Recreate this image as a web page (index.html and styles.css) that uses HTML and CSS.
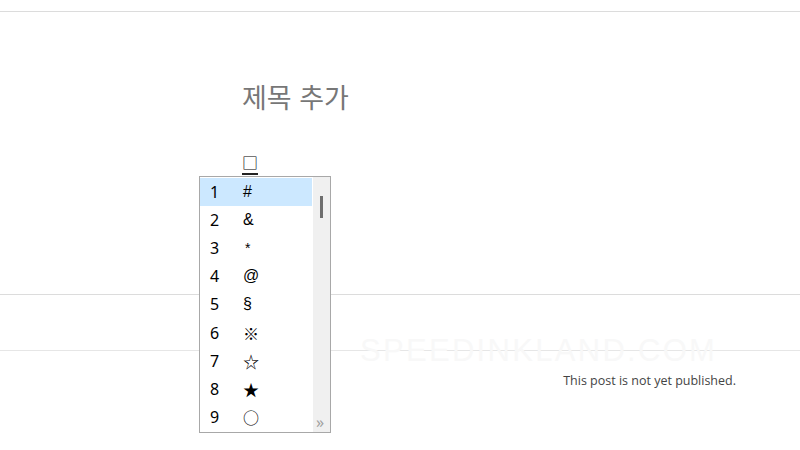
FILE: index.html
```html
<!DOCTYPE html>
<html lang="ko">
<head>
    <meta charset="UTF-8">
    <meta name="viewport" content="width=device-width, initial-scale=1.0">
    <title>제목 추가</title>
    <link rel="stylesheet" href="styles.css">
</head>
<body>
    <div class="topbar"></div>
    <div class="editor">
        <h1 class="title">제목 추가</h1>
        <div class="composer"><span class="composing">□</span></div>
        <ul class="candidates">
            <li class="active"><span class="num">1</span><span class="sym">#</span></li>
            <li><span class="num">2</span><span class="sym">&amp;</span></li>
            <li><span class="num">3</span><span class="sym small">*</span></li>
            <li><span class="num">4</span><span class="sym">@</span></li>
            <li><span class="num">5</span><span class="sym">§</span></li>
            <li><span class="num">6</span><span class="sym cjk">※</span></li>
            <li><span class="num">7</span><span class="sym cjk">☆</span></li>
            <li><span class="num">8</span><span class="sym cjk">★</span></li>
            <li><span class="num">9</span><span class="sym cjk">○</span></li>
            <div class="scroll">
                <div class="thumb"></div>
                <div class="more">»</div>
            </div>
        </ul>
    </div>
    <div class="blocks">
        <div class="watermark">SPEEDINKLAND.COM</div>
    </div>
    <div class="status">This post is not yet published.</div>
</body>
</html>
```

FILE: styles.css
```css
html, body {
    min-height: 450px;
}
body {
    margin: 0;
    font-family: "Noto Sans", "Noto Sans CJK KR", sans-serif;
    background: #fff;
    color: #222;
}
.topbar {
    height: 11px;
    border-bottom: 1px solid #dcdcdc;
}
.editor {
    position: relative;
    z-index: 2;
    height: 282px;
    padding-left: 242px;
    box-sizing: border-box;
}
.title {
    margin: 0;
    padding-top: 66px;
    font-family: "Noto Sans CJK KR", sans-serif;
    font-weight: 400;
    font-size: 27px;
    line-height: 38px;
    color: #777;
}
.composer {
    margin-top: 35px;
    height: 24px;
}
.composing {
    display: inline-block;
    font-family: "Noto Sans CJK KR", sans-serif;
    font-size: 16px;
    line-height: 22px;
    color: #000;
    border-bottom: 2px solid #222;
}
.candidates {
    position: absolute;
    left: 199px;
    top: 164px;
    width: 130px;
    height: 254px;
    margin: 0;
    padding: 1px 0 0 0;
    list-style: none;
    border: 1px solid #a8a8a8;
    background: #fff;
    box-sizing: content-box;
}
.candidates li {
    display: flex;
    align-items: center;
    width: 112px;
    height: 28.1px;
    font-size: 16px;
    color: #000;
}
.candidates li.active {
    background: #cce8ff;
}
.num {
    width: 43px;
    padding-left: 10px;
    box-sizing: border-box;
}
.sym {
    font-family: "Liberation Sans", sans-serif;
    font-size: 16px;
}
.sym.small {
    font-size: 14px;
    padding-left: 2px;
}
.sym.cjk {
    font-family: "Noto Sans CJK KR", sans-serif;
    font-size: 16px;
}
.scroll {
    position: absolute;
    top: 0;
    right: 0;
    width: 17px;
    height: 100%;
    background: #f0f0f0;
}
.thumb {
    margin: 19px 0 0 7px;
    width: 3px;
    height: 22px;
    background: #6e6e6e;
}
.more {
    position: absolute;
    bottom: 0;
    left: 3px;
    font-size: 16px;
    line-height: 20px;
    color: #a0a0a0;
}
.blocks {
    height: 55px;
    border-top: 1px solid #dcdcdc;
    border-bottom: 1px solid #e6e6e6;
    position: relative;
}
.watermark {
    position: absolute;
    left: 360px;
    top: 38px;
    font-family: "Liberation Sans", sans-serif;
    font-size: 31px;
    letter-spacing: 2.3px;
    color: #f8f8f8;
}
.status {
    text-align: right;
    padding: 21px 64px 0 0;
    font-family: "Open Sans", sans-serif;
    font-size: 12.5px;
    color: #444;
}
```
